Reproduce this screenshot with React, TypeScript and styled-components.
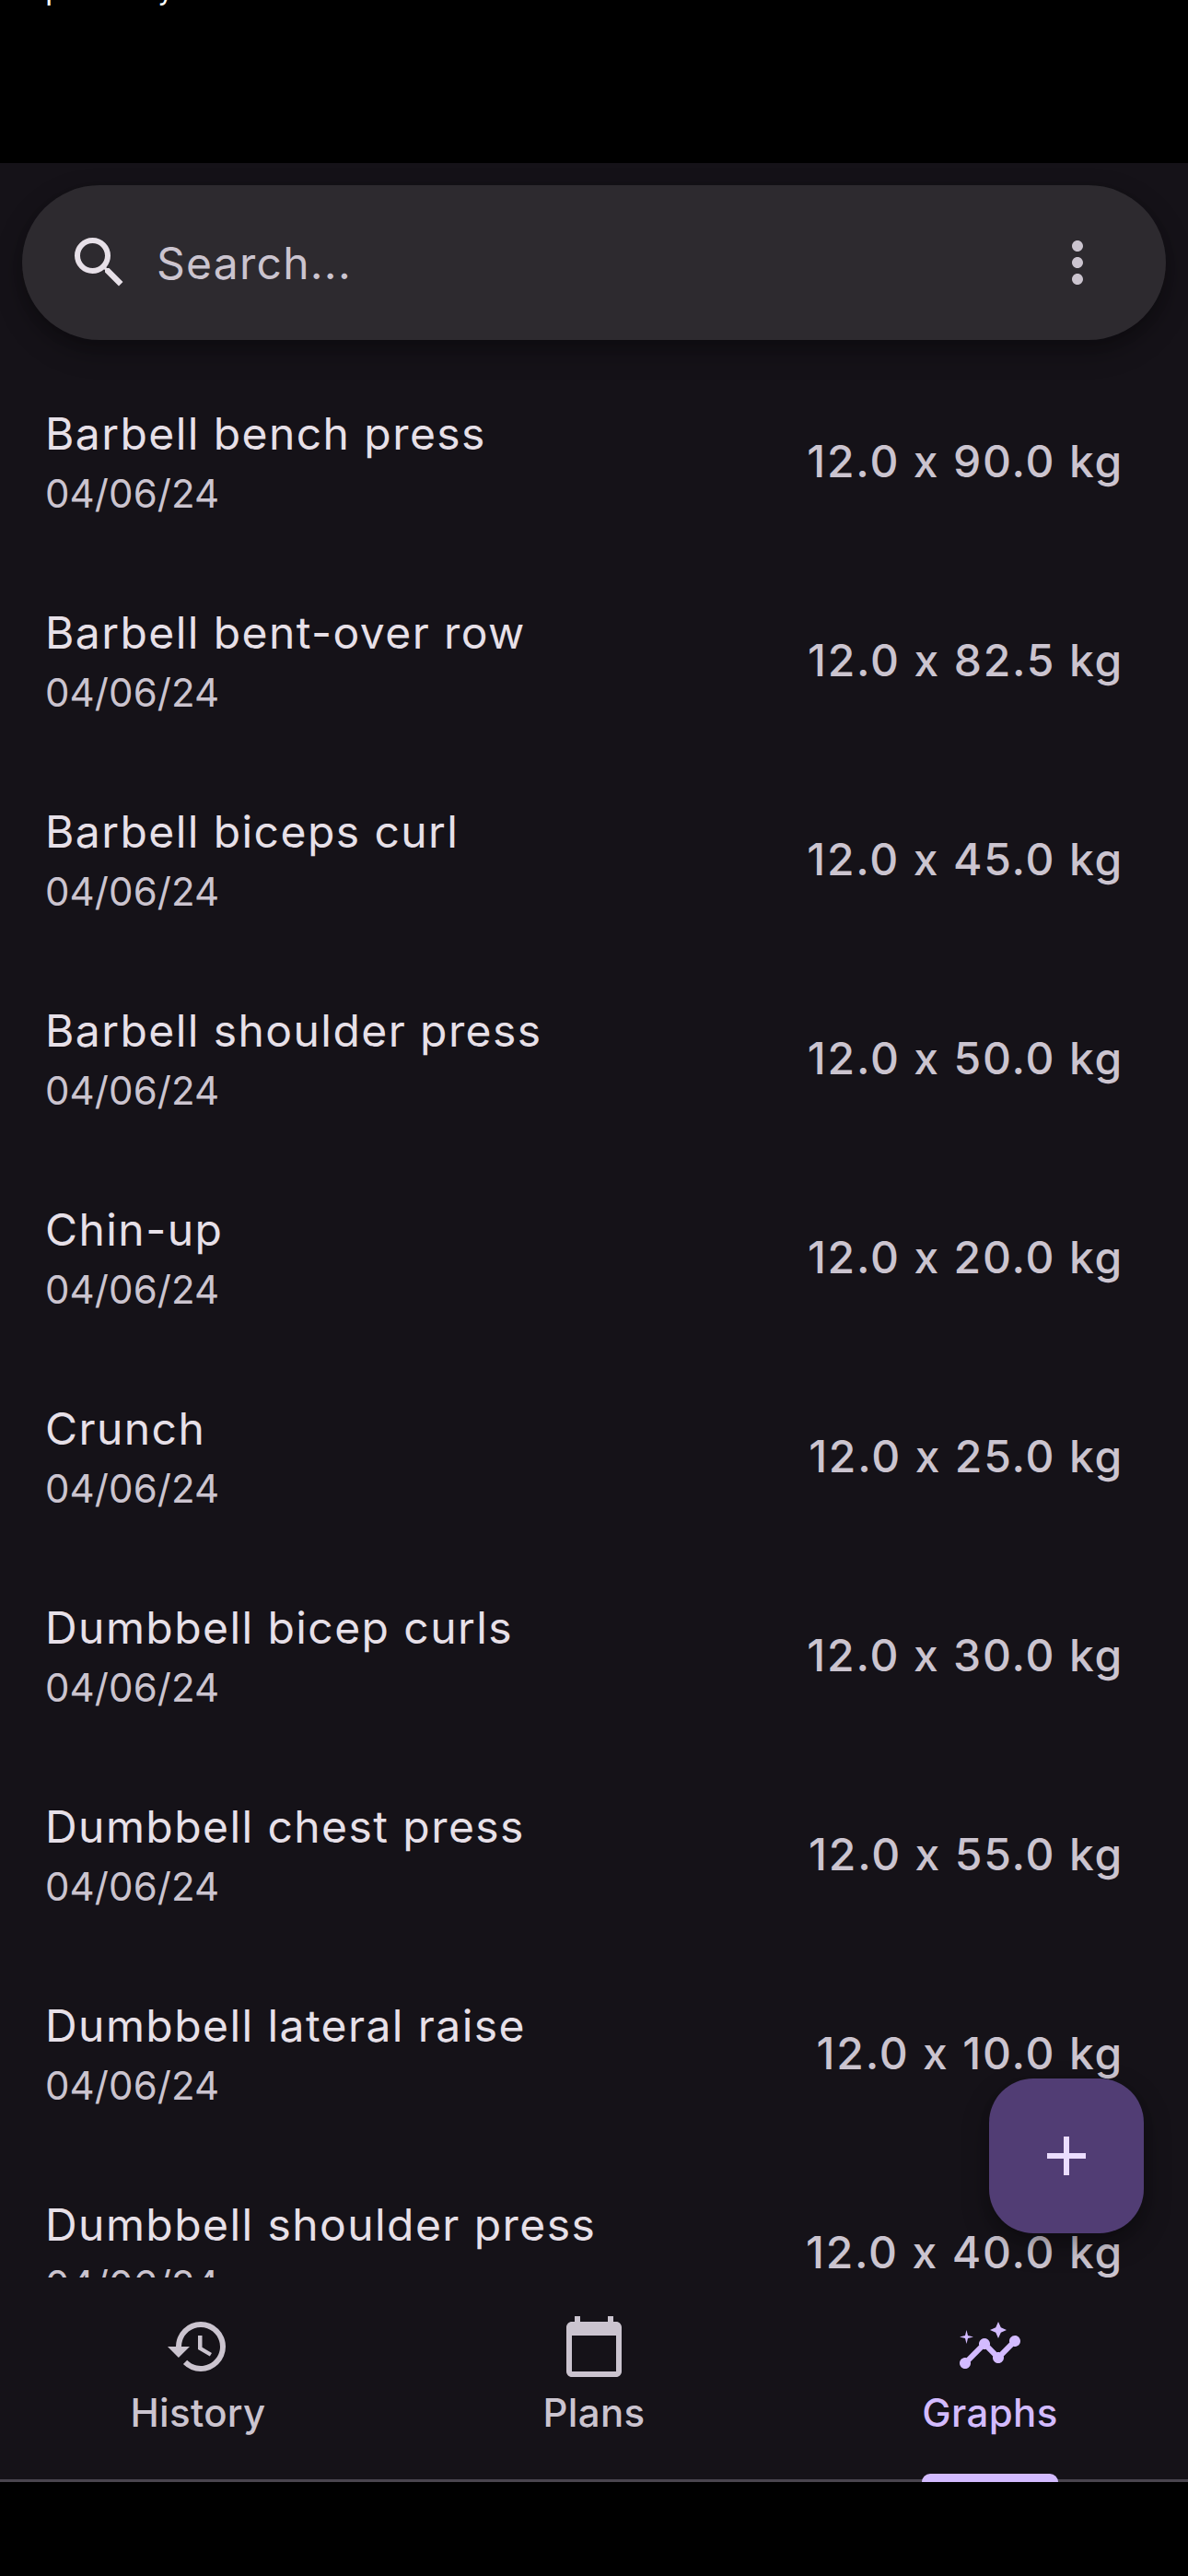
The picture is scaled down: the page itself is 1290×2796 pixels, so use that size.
import React from 'react';
import styled, { createGlobalStyle } from 'styled-components';
import { MdSearch, MdMoreVert, MdHistory, MdCalendarToday, MdInsights, MdAdd } from 'react-icons/md';
import type { IconType } from 'react-icons';

const GlobalStyle = createGlobalStyle`
  * { box-sizing: border-box; }
  body { margin: 0; background: #000; }
`;

const Screen = styled.div`
  width: 1290px;
  height: 2796px;
  display: flex;
  flex-direction: column;
  overflow: hidden;
  background: #000;
  color: #e7e0e8;
  font-family: Inter, 'Liberation Sans', sans-serif;
`;

const Caption = styled.header`
  height: 177px;
  flex: none;
  overflow: hidden;
  color: #fff;
  font-family: Roboto, 'Liberation Sans', sans-serif;
  font-size: 32px;
  line-height: 32px;
  word-spacing: -2px;
`;

const CaptionText = styled.div`
  margin-top: -27px;
  white-space: nowrap;
`;

const AppBody = styled.main`
  position: relative;
  height: 2295px;
  flex: none;
  overflow: hidden;
  background: #151218;
  padding: 24px 24px 0;
`;

const SearchBar = styled.div`
  height: 168px;
  display: flex;
  align-items: center;
  padding: 0 60px 0 48px;
  border-radius: 84px;
  background: #2d2a2f;
  box-shadow: 0 12px 30px rgba(0, 0, 0, 0.3), 0 6px 12px rgba(0, 0, 0, 0.1);
`;

const SearchLabel = styled.span`
  flex: 1;
  margin-left: 26px;
  color: #cbc4cf;
  font-size: 48px;
  letter-spacing: 1.25px;
`;

const List = styled.ul`
  list-style: none;
  margin: 24px -24px 0;
  padding: 0;
`;

const Row = styled.li`
  height: 216px;
  display: flex;
  align-items: center;
  justify-content: space-between;
  padding: 0 70px 0 49px;
`;

const Exercise = styled.div`
  display: flex;
  flex-direction: column;
`;

const Name = styled.span`
  font-size: 48px;
  line-height: 72px;
  letter-spacing: 1.43px;
`;

const DateText = styled.span`
  color: #cbc4cf;
  font-size: 42px;
  line-height: 57px;
  padding-bottom: 3px;
  letter-spacing: 0.1px;
`;

const Best = styled.span`
  color: #cbc4cf;
  font-size: 48px;
  font-weight: 500;
  line-height: 72px;
  letter-spacing: 1.8px;
`;

const AddButton = styled.button`
  position: absolute;
  right: 48px;
  bottom: 48px;
  width: 168px;
  height: 168px;
  display: grid;
  place-items: center;
  padding: 0;
  border: 0;
  border-radius: 48px;
  background: #513d74;
  color: #ebddff;
  box-shadow: 0 12px 30px rgba(0, 0, 0, 0.3), 0 6px 12px rgba(0, 0, 0, 0.1);
`;

const TabBar = styled.nav`
  height: 222px;
  flex: none;
  display: grid;
  grid-template-columns: repeat(3, 1fr);
  background: linear-gradient(#49454e, #49454e) bottom / 100% 3px no-repeat #151218;
`;

const Tab = styled.div<{ $active?: boolean }>`
  display: flex;
  flex-direction: column;
  align-items: center;
  padding-top: 39px;
  color: ${(p) => (p.$active ? '#d3bbff' : '#cbc4cf')};
`;

const TabLabel = styled.span`
  margin-top: 6px;
  font-size: 42px;
  font-weight: 500;
  line-height: 60px;
  letter-spacing: 0.35px;
`;

const Indicator = styled.div`
  width: 148px;
  height: 9px;
  margin-top: auto;
  border-radius: 9px 9px 0 0;
  background: #d3bbff;
`;

const exercises: [string, string][] = [
  ['Barbell bench press', '90.0'],
  ['Barbell bent-over row', '82.5'],
  ['Barbell biceps curl', '45.0'],
  ['Barbell shoulder press', '50.0'],
  ['Chin-up', '20.0'],
  ['Crunch', '25.0'],
  ['Dumbbell bicep curls', '30.0'],
  ['Dumbbell chest press', '55.0'],
  ['Dumbbell lateral raise', '10.0'],
  ['Dumbbell shoulder press', '40.0'],
];

const tabs: { label: string; icon: IconType; active?: boolean }[] = [
  { label: 'History', icon: MdHistory },
  { label: 'Plans', icon: MdCalendarToday },
  { label: 'Graphs', icon: MdInsights, active: true },
];

export default function App() {
  return (
    <Screen>
      <GlobalStyle />
      <Caption>
        <CaptionText>Graph history</CaptionText>
      </Caption>
      <AppBody>
        <SearchBar>
          <MdSearch size={72} />
          <SearchLabel>Search...</SearchLabel>
          <MdMoreVert size={72} color="#cbc4cf" />
        </SearchBar>
        <List>
          {exercises.map(([name, weight]) => (
            <Row key={name}>
              <Exercise>
                <Name>{name}</Name>
                <DateText>04/06/24</DateText>
              </Exercise>
              <Best>12.0 x {weight} kg</Best>
            </Row>
          ))}
        </List>
        <AddButton aria-label="Add">
          <MdAdd size={72} />
        </AddButton>
      </AppBody>
      <TabBar>
        {tabs.map(({ label, icon: Icon, active }) => (
          <Tab key={label} $active={active}>
            <Icon size={72} />
            <TabLabel>{label}</TabLabel>
            {active && <Indicator />}
          </Tab>
        ))}
      </TabBar>
    </Screen>
  );
}
